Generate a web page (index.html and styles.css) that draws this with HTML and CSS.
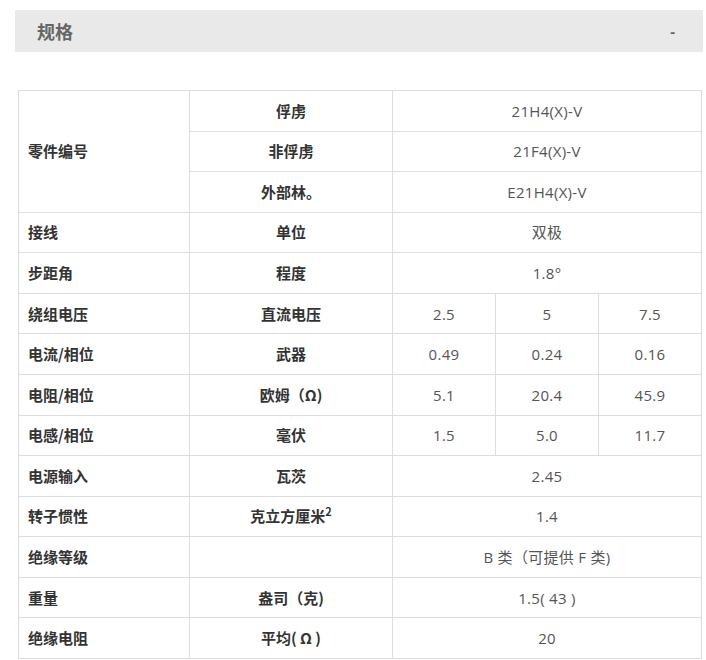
FILE: index.html
```html
<!DOCTYPE html>
<html lang="zh-CN">
<head>
<meta charset="utf-8">
<title>规格</title>
<link rel="stylesheet" href="styles.css">
</head>
<body>
<div class="page">
  <div class="spec-header">
    <span class="spec-title">规格</span>
    <span class="spec-toggle">-</span>
  </div>
  <table class="spec-table">
    <colgroup>
      <col class="c1"><col class="c2"><col class="c3"><col class="c4"><col class="c5">
    </colgroup>
    <tbody>
      <tr><td class="label" rowspan="3">零件编号</td><td class="unit">俘虏</td><td class="val" colspan="3">21H4(X)-V</td></tr>
      <tr><td class="unit">非俘虏</td><td class="val" colspan="3">21F4(X)-V</td></tr>
      <tr><td class="unit">外部林。</td><td class="val" colspan="3">E21H4(X)-V</td></tr>
      <tr><td class="label">接线</td><td class="unit">单位</td><td class="val" colspan="3">双极</td></tr>
      <tr><td class="label">步距角</td><td class="unit">程度</td><td class="val" colspan="3">1.8°</td></tr>
      <tr><td class="label">绕组电压</td><td class="unit">直流电压</td><td class="val">2.5</td><td class="val">5</td><td class="val">7.5</td></tr>
      <tr><td class="label">电流/相位</td><td class="unit">武器</td><td class="val">0.49</td><td class="val">0.24</td><td class="val">0.16</td></tr>
      <tr><td class="label">电阻/相位</td><td class="unit">欧姆（Ω)</td><td class="val">5.1</td><td class="val">20.4</td><td class="val">45.9</td></tr>
      <tr><td class="label">电感/相位</td><td class="unit">毫伏</td><td class="val">1.5</td><td class="val">5.0</td><td class="val">11.7</td></tr>
      <tr><td class="label">电源输入</td><td class="unit">瓦茨</td><td class="val" colspan="3">2.45</td></tr>
      <tr><td class="label">转子惯性</td><td class="unit">克立方厘米<sup>2</sup></td><td class="val" colspan="3">1.4</td></tr>
      <tr><td class="label">绝缘等级</td><td class="unit"></td><td class="val" colspan="3">B 类（可提供 F 类)</td></tr>
      <tr><td class="label">重量</td><td class="unit">盎司（克)</td><td class="val" colspan="3">1.5( 43 )</td></tr>
      <tr><td class="label">绝缘电阻</td><td class="unit">平均( Ω )</td><td class="val" colspan="3">20</td></tr>
    </tbody>
  </table>
</div>
</body>
</html>
```

FILE: styles.css
```css
html, body {
  margin: 0;
  padding: 0;
  background: #ffffff;
}

.page {
  padding: 10px 3px 0 15px;
  font-family: "Open Sans", "Noto Sans CJK SC", sans-serif;
}

.spec-header {
  display: flex;
  align-items: center;
  justify-content: space-between;
  height: 42px;
  background: #e9e9e9;
  padding: 0 28px 0 22px;
  box-sizing: border-box;
}

.spec-title {
  font-family: "Noto Sans CJK SC", sans-serif;
  font-weight: 700;
  font-size: 18px;
  color: #666666;
}

.spec-toggle {
  font-family: "Open Sans", sans-serif;
  font-weight: 700;
  font-size: 15px;
  color: #666666;
}

.spec-table {
  margin: 38px 0 0 3px;
  width: 683px;
  border-collapse: collapse;
  table-layout: fixed;
}

.c1 { width: 171px; }
.c2 { width: 203px; }
.c3 { width: 103px; }
.c4 { width: 103px; }
.c5 { width: 103px; }

.spec-table td {
  border: 1px solid #dddddd;
  height: 39.57px;
  padding: 0;
  font-size: 15px;
  line-height: 20px;
  vertical-align: middle;
}

.label {
  padding-left: 9px !important;
  text-align: left;
  font-family: "Noto Sans CJK SC", sans-serif;
  font-weight: 700;
  color: #333333;
}

.unit {
  text-align: center;
  font-family: "Noto Sans CJK SC", sans-serif;
  font-weight: 700;
  color: #333333;
}

.unit sup {
  font-size: 11px;
  line-height: 0;
  vertical-align: 6px;
}

.val {
  text-align: center;
  font-family: "Open Sans", "Noto Sans CJK SC", sans-serif;
  letter-spacing: 0.3px;
  color: #555555;
}
```
